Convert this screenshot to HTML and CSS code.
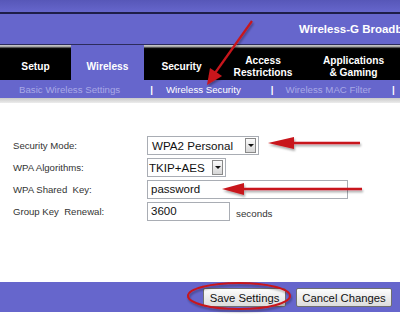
FILE: index.html
```html
<!DOCTYPE html>
<html lang="en">
<head>
    <meta charset="UTF-8">
    <meta name="viewport" content="width=device-width, initial-scale=1.0">
    <title>Wireless Security</title>
    <link rel="stylesheet" href="styles.css">
</head>
<body>
    <div class="page">
        <div class="top-strip"></div>
        <header class="title-bar">
            <h1>Wireless-G Broadband Router</h1>
        </header>
        <nav class="tabs">
            <a href="#" class="tab tab-setup">Setup</a>
            <a href="#" class="tab tab-wireless active">Wireless</a>
            <a href="#" class="tab tab-security">Security</a>
            <a href="#" class="tab tab-access">Access<br>Restrictions</a>
            <a href="#" class="tab tab-apps">Applications<br>&amp; Gaming</a>
        </nav>
        <div class="submenu">
            <a href="#" class="sub sub-basic">Basic Wireless Settings</a>
            <span class="sep">|</span>
            <a href="#" class="sub sub-security current">Wireless Security</a>
            <span class="sep">|</span>
            <a href="#" class="sub sub-mac">Wireless MAC Filter</a>
            <span class="sep sep-last">|</span>
        </div>
        <div class="divider"></div>

        <main class="content">
            <div class="form">
                <div class="row">
                    <label>Security Mode:</label>
                    <div class="select select-mode">
                        <span>WPA2 Personal</span>
                        <span class="drop"><i></i></span>
                    </div>
                </div>
                <div class="row row-tight">
                    <label>WPA Algorithms:</label>
                    <div class="select select-algo">
                        <span>TKIP+AES</span>
                        <span class="drop"><i></i></span>
                    </div>
                </div>
                <div class="row">
                    <label>WPA Shared &nbsp;Key:</label>
                    <div class="input input-key">password</div>
                </div>
                <div class="row">
                    <label>Group Key &nbsp;Renewal:</label>
                    <div class="input input-renew">3600</div>
                    <span class="unit">seconds</span>
                </div>
            </div>
        </main>

        <footer class="actions">
            <button class="btn btn-save">Save Settings</button>
            <button class="btn btn-cancel">Cancel Changes</button>
        </footer>

        <!-- red annotation arrows drawn over the screen -->
        <svg class="marks" width="400" height="317" viewBox="0 0 400 317">
            <defs>
                <filter id="shadow" x="-20%" y="-20%" width="140%" height="160%">
                    <feDropShadow dx="1" dy="2" stdDeviation="1.2" flood-color="#000" flood-opacity="0.35"/>
                </filter>
            </defs>
            <g filter="url(#shadow)" fill="#c8161c" stroke="#c8161c">
                <line x1="252" y1="21" x2="215" y2="73" stroke-width="2.2"/>
                <polygon points="207,85 210,68 222,76" stroke="none"/>

                <line x1="360" y1="143" x2="285" y2="143" stroke-width="2.5"/>
                <polygon points="268,143 294,137 294,149" stroke="none"/>

                <line x1="362" y1="189" x2="238" y2="189" stroke-width="2.5"/>
                <polygon points="222,189 244,183 244,195" stroke="none"/>

                <ellipse cx="239" cy="296" rx="51" ry="13" fill="none" stroke-width="2"/>
            </g>
        </svg>
    </div>
</body>
</html>
```
FILE: styles.css
```css
body {
    margin: 0;
    padding: 0;
    background-color: #fff;
    font-family: "Liberation Sans", Arial, sans-serif;
    overflow: hidden;
}
.page {
    position: relative;
    width: 400px;
    height: 317px;
    overflow: hidden;
}
.top-strip {
    height: 12px;
    background: linear-gradient(to bottom, #5757b8, #6666cc);
    border-bottom: 2px solid #1e1e48;
}
.title-bar {
    height: 30px;
    background-color: #6666cc;
    border-bottom: 1px solid #2c2c5c;
    display: flex;
    align-items: center;
}
.title-bar h1 {
    margin: 0 0 0 299px;
    font-size: 11.5px;
    font-weight: bold;
    color: #fff;
    white-space: nowrap;
}
.tabs {
    display: flex;
    height: 35px;
}
.tab {
    display: flex;
    align-items: center;
    justify-content: center;
    text-align: center;
    color: #fff;
    text-decoration: none;
    font-size: 10.2px;
    font-weight: bold;
    line-height: 12px;
    padding-top: 8px;
    box-sizing: border-box;
    background: linear-gradient(to bottom, #d0d0d0 0, #9a9a9a 2px, #111 3px, #000 5px, #000 100%);
}
.tab.active {
    background: #6666cc;
}
.tab-setup { width: 71px; }
.tab-wireless { width: 73px; }
.tab-security { width: 75px; }
.tab-access { width: 88px; }
.tab-apps { width: 93px; }
.submenu {
    height: 18px;
    background-color: #6666cc;
    display: flex;
    align-items: center;
    font-size: 9.7px;
    white-space: nowrap;
}
.sub {
    text-decoration: none;
    color: #a9a9e6;
}
.sub.current {
    color: #fff;
}
.sub-basic { margin-left: 19px; }
.sub-security { margin-left: 13px; }
.sub-mac { margin-left: 12px; }
.sep {
    color: #fff;
    font-weight: bold;
    margin-left: 30px;
}
.sep-last {
    margin-left: 21px;
}
.divider {
    height: 5px;
    background: linear-gradient(to bottom, #c9c9c9, #ececec);
}
.content {
    height: 179px;
    box-sizing: border-box;
    padding-top: 33px;
}
.form {
    display: flex;
    flex-direction: column;
    gap: 3px;
}
.row {
    display: flex;
    align-items: center;
    height: 19px;
}
.row label {
    width: 134px;
    padding-left: 13px;
    font-size: 9.6px;
    color: #333;
    white-space: nowrap;
}
.select {
    display: flex;
    align-items: center;
    justify-content: space-between;
    height: 19px;
    box-sizing: border-box;
    border: 1px solid #a9adb4;
    background: #fff;
    padding: 0 2px 0 4px;
    font-size: 11.6px;
    color: #111;
}
.select-mode { width: 112px; }
.select-algo { width: 79px; padding-left: 1px; }
.drop {
    width: 11px;
    height: 15px;
    box-sizing: border-box;
    border: 1px solid #8a8a8a;
    background: linear-gradient(to bottom, #fbfbfb, #d6d6d6);
    display: flex;
    align-items: center;
    justify-content: center;
}
.drop i {
    width: 0;
    height: 0;
    border-left: 3px solid transparent;
    border-right: 3px solid transparent;
    border-top: 3px solid #111;
}
.input {
    height: 19px;
    box-sizing: border-box;
    border: 1px solid #a9adb4;
    padding-left: 3px;
    font-size: 11.5px;
    line-height: 17px;
    color: #111;
}
.input-key { width: 201px; }
.input-renew { width: 83px; }
.unit {
    margin-left: 6px;
    font-size: 9.8px;
    color: #333;
    padding-top: 4px;
}
.actions {
    height: 30px;
    background-color: #6666cc;
    display: flex;
    align-items: center;
    justify-content: flex-end;
    gap: 10px;
    padding-right: 8px;
}
.btn {
    height: 19px;
    padding: 0 5px;
    border: 1px solid #6f6f6f;
    border-radius: 2px;
    background: linear-gradient(to bottom, #fdfdfd, #dcdcdc);
    font-family: "Liberation Sans", Arial, sans-serif;
    font-size: 11.3px;
    color: #111;
    margin-top: 1px;
}
.btn-save { width: 83px; }
.btn-cancel { width: 96px; }
.marks {
    position: absolute;
    top: 0;
    left: 0;
    pointer-events: none;
}
```
